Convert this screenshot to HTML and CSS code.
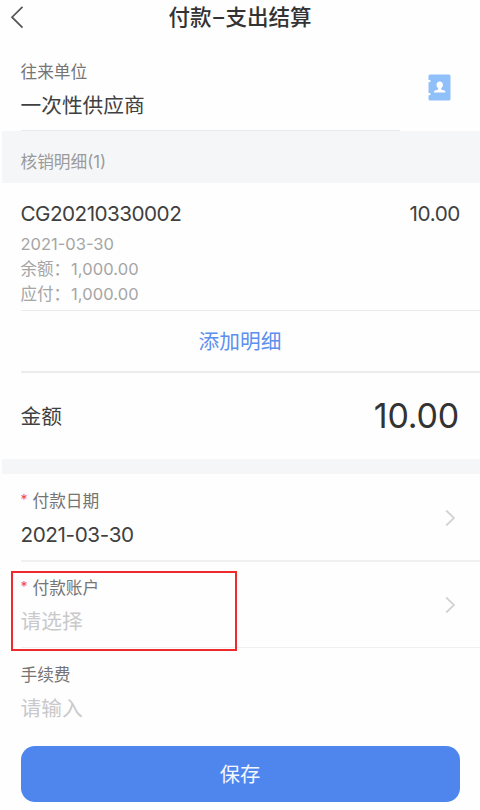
FILE: index.html
```html
<!DOCTYPE html>
<html lang="zh-CN">
<head>
<meta charset="utf-8">
<title>付款–支出结算</title>
<link rel="stylesheet" href="styles.css">
</head>
<body>
<main class="page">
  <header class="header">
    <svg class="back" width="14" height="24" viewBox="0 0 14 24" fill="none" stroke="#555" stroke-width="1.7"><path d="M12.5 1.8 2 12.2 12.5 22.6"/></svg>
    <h1 class="title">付款<span class="dash">–</span>支出结算</h1>
  </header>
  <section class="field vendor">
    <div class="field-text">
      <div class="label">往来单位</div>
      <div class="value">一次性供应商</div>
    </div>
    <svg class="contact" width="23" height="27" viewBox="0 0 23 27"><path fill="#8fc0fa" d="M2 .5h19a1.500 1.500 0 0 1 1.500 1.500v23a1.500 1.500 0 0 1-1.500 1.500H2A1.500 1.500 0 0 1 .5 25v-3.700h1a1.100 1.100 0 0 0 0-2.200h-1V8.200h1a1.100 1.100 0 0 0 0-2.200h-1V2A1.500 1.500 0 0 1 2 .5Z"/><path fill="#fff" d="M11.700 7.500c-2 0-3.200 1.400-3.200 3.300 0 1.500.7 2.700 1.700 3.400v1.200l-3.100 1.200c-.8.300-1.200.8-1.200 1.900h11.600c0-1.100-.4-1.600-1.200-1.900l-3.100-1.200v-1.200c1-.7 1.700-1.900 1.700-3.400 0-1.900-1.200-3.300-3.200-3.300Z"/></svg>
  </section>
  <div class="band band-title">核销明细(1)</div>
  <section class="detail">
    <div class="detail-head"><span class="code">CG20210330002</span><span class="detail-sum">10.00</span></div>
    <div class="meta">2021-03-30</div>
    <div class="meta">余额：<span class="num">1,000.00</span></div>
    <div class="meta">应付：<span class="num">1,000.00</span></div>
  </section>
  <div class="add">添加明细</div>
  <section class="total"><span class="value">金额</span><span class="amount">10.00</span></section>
  <div class="band"></div>
  <section class="field date">
    <div class="field-text">
      <div class="label"><span class="star">*</span>付款日期</div>
      <div class="value day">2021-03-30</div>
    </div>
    <svg class="arrow" width="11" height="18" viewBox="0 0 11 18" fill="none" stroke="#d3d3d3" stroke-width="1.8"><path d="M1.200 1.500 9 9l-7.800 7.500"/></svg>
  </section>
  <section class="field account">
    <div class="field-text">
      <div class="label"><span class="star">*</span>付款账户</div>
      <div class="value placeholder">请选择</div>
    </div>
    <svg class="arrow" width="11" height="18" viewBox="0 0 11 18" fill="none" stroke="#d3d3d3" stroke-width="1.8"><path d="M1.200 1.500 9 9l-7.800 7.500"/></svg>
    <div class="highlight"></div>
  </section>
  <section class="field fee">
    <div class="field-text">
      <div class="label">手续费</div>
      <div class="value placeholder">请输入</div>
    </div>
  </section>
  <button class="save" type="button">保存</button>
</main>
</body>
</html>
```
FILE: styles.css
```css
* { box-sizing: border-box; }
body {
  margin: 0;
  background: #fefefe;
  color: #404040;
  font-family: Inter, "Noto Sans CJK SC", sans-serif;
}
.page { width: 480px; height: 810px; overflow: hidden; }
.header {
  display: grid;
  grid-template-columns: 32px 1fr 32px;
  align-items: center;
  height: 55px;
  padding-bottom: 22px;
}
.back { margin-left: 10px; }
.title {
  margin: 0;
  text-align: center;
  font-size: 21.5px;
  font-weight: 500;
  line-height: 32px;
  white-space: nowrap;
  color: #333;
}
.dash { display: inline-block; width: 14px; text-align: center; }
.field {
  display: flex;
  justify-content: space-between;
  align-items: center;
  position: relative;
  margin-left: 20.5px;
  padding-right: 24px;
}
.field-text { align-self: flex-start; }
.label { height: 34px; font-size: 16.7px; line-height: 34px; color: #757575; }
.value { height: 32px; font-size: 20.7px; line-height: 34px; }
.vendor { height: 76px; padding-right: 29.5px; }
.vendor::after {
  content: "";
  position: absolute;
  left: 0;
  bottom: 0;
  width: 379px;
  height: 1px;
  background: #e6eaed;
}
.contact { margin-bottom: 11px; }
.band { height: 15px; margin-left: 2px; background: #f5f6f8; }
.band-title {
  height: 52px;
  padding: 5px 0 0 18.5px;
  font-size: 16.7px;
  line-height: 52px;
  color: #9b9b9b;
}
.detail {
  height: 128px;
  margin-left: 20.5px;
  padding-top: 14px;
  border-bottom: 1px solid #ebebeb;
}
.detail-head {
  display: flex;
  justify-content: space-between;
  height: 35px;
  padding-right: 20px;
  font-size: 20.7px;
  line-height: 34px;
}
.code { letter-spacing: -0.53px; }
.detail-sum { letter-spacing: -0.4px; }
.meta { height: 25px; font-size: 16.5px; line-height: 25px; color: #a5a5a5; }
.num { margin-left: 1px; letter-spacing: 0.1px; }
.add {
  height: 62px;
  margin-left: 21px;
  padding-right: 21px;
  border-bottom: 2px solid #ebebeb;
  text-align: center;
  font-size: 20.7px;
  line-height: 61px;
  color: #5c8ff0;
}
.total {
  display: flex;
  justify-content: space-between;
  align-items: center;
  height: 86px;
  padding: 0 21px 0 20.5px;
}
.amount { font-size: 34px; line-height: 50px; letter-spacing: -0.2px; color: #333; }
.date { height: 88px; padding-top: 10px; border-bottom: 2px solid #f0f0f0; }
.day { letter-spacing: -0.4px; }
.account { height: 86px; padding-top: 9px; border-bottom: 1px solid #efefef; }
.arrow { margin-bottom: 9px; }
.star {
  display: inline-block;
  width: 12px;
  line-height: 1;
  vertical-align: 2px;
  color: #f04a3e;
  font-size: 14px;
}
.placeholder { color: #c9c9cb; }
.highlight {
  position: absolute;
  left: -9.5px;
  top: 9px;
  width: 226px;
  height: 80px;
  border: 2px solid #ee2a2d;
}
.fee { height: 98px; padding-top: 10px; }
.save {
  display: block;
  width: 439px;
  height: 56px;
  margin-left: 20.5px;
  padding: 0;
  border: 0;
  border-radius: 14px;
  background: #4e86ee;
  color: #f4f7fe;
  font-family: inherit;
  font-size: 20.3px;
  line-height: 58px;
}
```
